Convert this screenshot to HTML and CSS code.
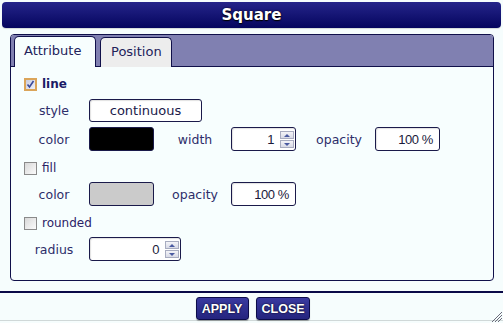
FILE: index.html
```html
<!DOCTYPE html>
<html>
<head>
<meta charset="utf-8">
<link rel="stylesheet" href="styles.css">
</head>
<body>
<div class="dialog">
  <div class="title">Square</div>
  <div class="panel">
    <div class="tabs">
      <div class="tab active">Attribute</div>
      <div class="tab">Position</div>
    </div>
    <div class="content">
      <div class="check-row r-line">
        <span class="cb checked"><svg width="9" height="9" viewBox="0 0 9 9"><path d="M1.5 4.5 L3.5 7 L7.5 1" fill="none" stroke="#3a4a9a" stroke-width="1.6"/></svg></span>
        <span class="cb-label bold">line</span>
      </div>
      <div class="row r-style">
        <span class="lbl l1">style</span>
        <div class="field text style-field">continuous</div>
      </div>
      <div class="row r-color">
        <span class="lbl l1">color</span>
        <div class="swatch black"></div>
        <span class="lbl l2">width</span>
        <div class="field num w64"><span class="val">1</span><span class="spin"><span class="up"></span><span class="down"></span></span></div>
        <span class="lbl l3">opacity</span>
        <div class="field num w65"><span class="val">100 %</span></div>
      </div>
      <div class="check-row r-fill">
        <span class="cb"></span>
        <span class="cb-label">fill</span>
      </div>
      <div class="row r-fcolor">
        <span class="lbl l1">color</span>
        <div class="swatch grey"></div>
        <span class="lbl l2">opacity</span>
        <div class="field num w65"><span class="val">100 %</span></div>
      </div>
      <div class="check-row r-round">
        <span class="cb"></span>
        <span class="cb-label">rounded</span>
      </div>
      <div class="row r-radius">
        <span class="lbl l1">radius</span>
        <div class="field num w92"><span class="val">0</span><span class="spin"><span class="up"></span><span class="down"></span></span></div>
      </div>
    </div>
  </div>
  <div class="footer">
    <button class="btn">APPLY</button>
    <button class="btn">CLOSE</button>
  </div>
  <svg class="grip" width="11" height="11" viewBox="0 0 11 11">
    <path d="M11 1 L1 11 M11 4 L4 11 M11 7 L7 11" stroke="#6a6a7a" stroke-width="1"/>
  </svg>
</div>
</body>
</html>
```

FILE: styles.css
```css
html, body {
  margin: 0;
  padding: 0;
  background: #f6fdfd;
}
body {
  width: 503px;
  height: 323px;
  overflow: hidden;
  font-family: "DejaVu Sans", Verdana, sans-serif;
  font-size: 12px;
  color: #2b2b66;
}
.dialog {
  position: relative;
  height: 323px;
  padding: 2px 2px 0 2px;
  box-sizing: border-box;
}
.title {
  height: 26px;
  border-radius: 4px;
  background: linear-gradient(#25258a, #05055e);
  color: #fff;
  font-weight: bold;
  font-size: 15px;
  display: flex;
  align-items: center;
  justify-content: center;
  text-shadow: 0 1px 1px #000, 0 0 2px #000;
  box-shadow: 0 1px 1px rgba(0,0,0,0.15);
}
.panel {
  margin: 6px 7px 0 8px;
  height: 247px;
  border: 1px solid #10104a;
  border-radius: 4px;
  box-sizing: border-box;
  background: #f7fefe;
  display: flex;
  flex-direction: column;
}
.tabs {
  height: 32px;
  box-sizing: border-box;
  background: #8080b1;
  border-bottom: 1px solid #10104a;
  display: flex;
  align-items: flex-end;
  padding: 0 0 0 3px;
  gap: 4px;
  border-radius: 3px 3px 0 0;
}
.tab {
  box-sizing: border-box;
  border: 1px solid #10104a;
  border-bottom: none;
  border-radius: 5px 5px 0 0;
  background: #ededed;
  font-size: 13px;
  color: #22225a;
  padding: 6px 9px 0 10px;
  margin-bottom: -1px;
  height: 30px;
}
.tab.active {
  background: #f7fefe;
  padding-left: 9px;
  width: 82px;
  height: 31px;
}
.content {
  padding: 10px 0 0 13px;
}
.check-row {
  display: flex;
  align-items: center;
  height: 14px;
}
.cb {
  width: 13px;
  height: 13px;
  box-sizing: border-box;
  border: 1px solid #8a8a8a;
  background: linear-gradient(135deg, #d8d8d8, #fbfbfb);
  display: flex;
  align-items: center;
  justify-content: center;
}
.cb.checked {
  border: 2px solid #dba55a;
  background: linear-gradient(135deg, #c8cce0, #eef0f8);
}
.cb-label {
  margin-left: 5px;
  color: #2b2266;
  font-size: 12px;
}
.cb-label.bold {
  font-weight: bold;
  color: #1a1a66;
}
.row {
  display: flex;
  align-items: center;
  height: 24px;
  padding-left: 4px;
}
.lbl {
  text-align: center;
  color: #2e2e6a;
  font-size: 12.5px;
}
.l1 { width: 52px; margin-right: 9px; }
.l2 { width: 70px; margin-left: 6px; margin-right: 1px; }
.l3 { width: 72px; margin-left: 7px; }
.r-style { margin-top: 8px; height: 23px; }
.r-color { margin-top: 5px; }
.r-fill { margin-top: 10px; }
.r-fcolor { margin-top: 7px; }
.r-round { margin-top: 10px; }
.r-radius { margin-top: 7px; }
.field {
  height: 24px;
  box-sizing: border-box;
  border: 1px solid #1a1a4a;
  border-radius: 3px;
  background: #fff;
  box-shadow: inset 1px 1px 1px rgba(0,0,0,0.12);
  display: flex;
  align-items: center;
}
.r-style .field { height: 23px; }
.style-field {
  width: 113px;
  justify-content: center;
  font-size: 13px;
  color: #1a1a4a;
}
.num {
  justify-content: flex-end;
  font-family: "Liberation Sans", Arial, sans-serif;
  font-size: 13px;
  color: #1a1a3a;
  padding-right: 6px;
  letter-spacing: -0.4px;
}
.w64 { width: 65px; padding-right: 1px; }
.w65 { width: 65px; }
.w92 { width: 92px; padding-right: 1px; }
.w64 .val, .w92 .val { margin-right: 6px; }
.spin {
  width: 14px;
  height: 17px;
  display: flex;
  flex-direction: column;
  gap: 1px;
}
.spin span {
  flex: 1;
  border: 1px solid #a8acc0;
  background: linear-gradient(#f4f4f8, #d8dae6);
  position: relative;
}
.spin span::after {
  content: "";
  position: absolute;
  left: 3px;
  top: 2px;
  border-left: 3px solid transparent;
  border-right: 3px solid transparent;
}
.spin .up::after { border-bottom: 3px solid #4a5aa0; }
.spin .down::after { border-top: 3px solid #4a5aa0; }
.swatch {
  width: 65px;
  height: 24px;
  box-sizing: border-box;
  border: 1px solid #1a1a4a;
  border-radius: 3px;
}
.swatch.black { background: #000; }
.swatch.grey { background: #cbcbcb; }
.footer {
  margin: 10px -2px 0 -2px;
  border-top: 2px solid #0a0a48;
  box-shadow: 0 1px 0 #d0d8d8;
  display: flex;
  justify-content: center;
  gap: 7px;
  padding-top: 4px;
  padding-left: 2px;
}
.btn {
  height: 23px;
  box-sizing: border-box;
  border: 1px solid #0c0c4a;
  border-radius: 3px;
  background: linear-gradient(#3a3aa0, #24247e);
  color: #fff;
  font-family: "Liberation Sans", Arial, sans-serif;
  font-weight: bold;
  font-size: 12.5px;
  padding: 0 5px;
  text-shadow: 0 0 2px #000;
  box-shadow: 0 1px 1px rgba(0,0,0,0.3);
}
.btn:first-child { width: 53px; }
.btn:last-child { width: 54px; }
.grip {
  position: absolute;
  right: 1px;
  bottom: 1px;
}
```
